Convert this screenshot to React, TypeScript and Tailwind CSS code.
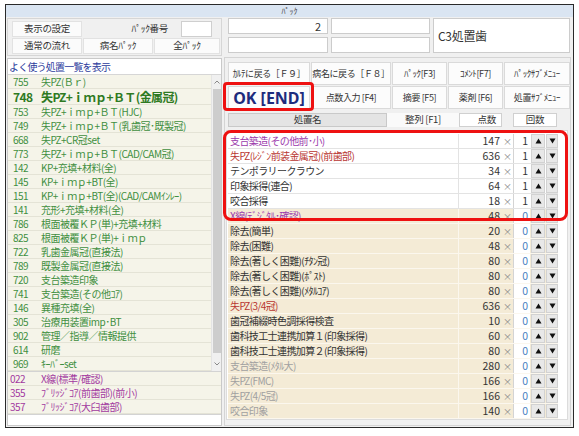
import React from "react";

type Row = { name: string; pts: number; cnt: number; color: "p" | "r" | "d" | "g"; bg: "w" | "c" };

const rows: Row[] = [
  { name: "支台築造(その他前･小)", pts: 147, cnt: 1, color: "p", bg: "w" },
  { name: "失PZ(ﾚｼﾞﾝ前装金属冠)(前歯部)", pts: 636, cnt: 1, color: "r", bg: "w" },
  { name: "テンポラリークラウン", pts: 34, cnt: 1, color: "d", bg: "w" },
  { name: "印象採得(連合)", pts: 64, cnt: 1, color: "d", bg: "w" },
  { name: "咬合採得", pts: 18, cnt: 1, color: "d", bg: "w" },
  { name: "X線(ﾃﾞｼﾞﾀﾙ･確認)", pts: 48, cnt: 0, color: "p", bg: "c" },
  { name: "除去(簡単)", pts: 20, cnt: 0, color: "d", bg: "c" },
  { name: "除去(困難)", pts: 48, cnt: 0, color: "d", bg: "c" },
  { name: "除去(著しく困難)(ﾁﾀﾝ冠)", pts: 80, cnt: 0, color: "d", bg: "c" },
  { name: "除去(著しく困難)(ﾎﾟｽﾄ)", pts: 80, cnt: 0, color: "d", bg: "c" },
  { name: "除去(著しく困難)(ﾒﾀﾙｺｱ)", pts: 80, cnt: 0, color: "d", bg: "c" },
  { name: "失PZ(3/4冠)", pts: 636, cnt: 0, color: "r", bg: "c" },
  { name: "歯冠補綴時色調採得検査", pts: 10, cnt: 0, color: "d", bg: "c" },
  { name: "歯科技工士連携加算１(印象採得)", pts: 60, cnt: 0, color: "d", bg: "c" },
  { name: "歯科技工士連携加算２(印象採得)", pts: 80, cnt: 0, color: "d", bg: "c" },
  { name: "支台築造(ﾒﾀﾙ大)", pts: 280, cnt: 0, color: "g", bg: "c" },
  { name: "失PZ(FMC)", pts: 166, cnt: 0, color: "g", bg: "c" },
  { name: "失PZ(4/5冠)", pts: 166, cnt: 0, color: "g", bg: "c" },
  { name: "咬合印象", pts: 140, cnt: 0, color: "g", bg: "c" },
];

const colorCls: Record<string, string> = {
  p: "text-[#9b3aac]",
  r: "text-[#b8352f]",
  d: "text-[#333333]",
  g: "text-[#a0a0a0]",
};

const leftItems: [string, string][] = [
  ["753", "失PZ+ｉｍｐ+ＢＴ(HJC)"],
  ["749", "失PZ+ｉｍｐ+ＢＴ(乳歯冠･既製冠)"],
  ["668", "失PZ+CR冠set"],
  ["773", "失PZ+ｉｍｐ+ＢＴ(CAD/CAM冠)"],
  ["142", "KP+充填+材料(全)"],
  ["145", "KP+ｉｍｐ+BT(全)"],
  ["151", "KP+ｉｍｐ+BT(全)(CAD/CAMｲﾝﾚｰ)"],
  ["141", "充形+充填+材料(全)"],
  ["786", "根面被覆ＫＰ(単)+充填+材料"],
  ["825", "根面被覆ＫＰ(単)+ｉｍｐ"],
  ["722", "乳歯金属冠(直接法)"],
  ["789", "既製金属冠(直接法)"],
  ["720", "支台築造印象"],
  ["741", "支台築造(その他ｺｱ)"],
  ["146", "異種充填(全)"],
  ["305", "治療用装置imp･BT"],
  ["902", "管理／指導／情報提供"],
  ["614", "研磨"],
  ["969", "ｷｰﾊﾞｰset"],
];

const lowerItems: [string, string][] = [
  ["022", "X線(標準/確認)"],
  ["355", "ﾌﾞﾘｯｼﾞｺｱ(前歯部)(前小)"],
  ["357", "ﾌﾞﾘｯｼﾞｺｱ(大臼歯部)"],
];

function Tri({ up }: { up: boolean }) {
  return (
    <svg width="7" height="6" viewBox="0 0 7 6">
      {up ? <polygon points="3.5,0.5 6.5,5.5 0.5,5.5" fill="#111" /> : <polygon points="0.5,0.5 6.5,0.5 3.5,5.5" fill="#111" />}
    </svg>
  );
}

function Chev({ up }: { up: boolean }) {
  return (
    <svg width="6" height="4" viewBox="0 0 6 4">
      <polyline points={up ? "0.5,3.5 3,1 5.5,3.5" : "0.5,0.5 3,3 5.5,0.5"} fill="none" stroke="#888" strokeWidth="1" />
    </svg>
  );
}

function SmallBtn({ children, w }: { children: React.ReactNode; w: string }) {
  return (
    <div className={`${w} h-[16px] bg-[#fbfbfb] border border-[#e2e2e2] flex items-center justify-center text-[9.5px] tracking-[-0.3px] text-[#333]`}>
      {children}
    </div>
  );
}

export default function App() {
  return (
    <div className="relative w-[579px] h-[436px] bg-white pt-[4px] pl-[5px] overflow-hidden font-['Noto_Sans_CJK_JP',sans-serif] text-[#333] leading-none">
      <div className="w-[569px] h-[424px] border border-[#2a2a2a] bg-[#f0f0f0] flex flex-col">
        <div className="h-[12px] bg-[#dae5f2] text-[8px] leading-[12px] text-center text-[#444]">ﾊﾟｯｸ</div>
        <div className="flex flex-1 min-h-0">
          {/* LEFT COLUMN */}
          <div className="ml-[1px] w-[215px] flex flex-col">
            <div className="mt-[1px] h-[38px] border border-[#d6d6d6] pt-[2px] pl-[4px] flex flex-col">
              <div className="flex h-[16px] items-center">
                <SmallBtn w="w-[70px]">表示の設定</SmallBtn>
                <div className="w-[86px] text-right text-[9.5px] tracking-[-0.3px]">ﾊﾟｯｸ番号</div>
                <div className="ml-[13px] w-[31px] h-[16px] bg-white border border-[#cfcfcf]" />
              </div>
              <div className="flex h-[16px] mt-[1px]">
                <SmallBtn w="w-[70px]">通常の流れ</SmallBtn>
                <div className="ml-[1px]"><SmallBtn w="w-[70px]">病名ﾊﾟｯｸ</SmallBtn></div>
                <div className="ml-[1px]"><SmallBtn w="w-[66px]">全ﾊﾟｯｸ</SmallBtn></div>
              </div>
            </div>
            <div className="mt-[2px] mb-[1px] flex-1 min-h-0 bg-white border border-[#c9c9c9] flex flex-col">
              <div className="h-[16px] border-b border-[#d6d6d6] pl-[1px] flex items-center text-[10px] tracking-[-0.8px] text-[#2c3b9c]">
                よく使う処置一覧を表示
              </div>
              <div className="h-[296px] flex overflow-hidden">
                <div className="flex-1 bg-[#f5f4e9] flex flex-col text-[#3f8f3f] text-[10px] tracking-[-0.5px]">
                  <div className="h-[14px] shrink-0 flex items-center border-b border-[#e4e3d6] pl-[5px]">
                    <span className="w-[28px]">755</span>
                    <span>失PZ(Ｂｒ)</span>
                  </div>
                  <div className="h-[16px] shrink-0 flex items-center border-b border-[#e4e3d6] pl-[5px] text-[12px] font-bold text-[#2e7a22] tracking-[-0.6px]">
                    <span className="w-[28px]">748</span>
                    <span>失PZ+ｉｍｐ+ＢＴ(金属冠)</span>
                  </div>
                  {leftItems.map(([n, t]) => (
                    <div key={n} className="h-[14px] shrink-0 flex items-center border-b border-[#e4e3d6] pl-[5px]">
                      <span className="w-[28px]">{n}</span>
                      <span>{t}</span>
                    </div>
                  ))}
                </div>
                <div className="w-[10px] bg-[#f0f0f0] border-l border-[#e4e4e4] flex flex-col items-center">
                  <div className="h-[14px] flex items-center justify-center"><Chev up /></div>
                  <div className="w-[8px] h-[264px] bg-[#cdcdcd]" />
                  <div className="flex-1" />
                  <div className="h-[14px] flex items-center justify-center"><Chev up={false} /></div>
                </div>
              </div>
              <div className="border-y border-[#d3d3d3] bg-[#f5f4e9] flex flex-col text-[10px] tracking-[-0.5px] text-[#a2399f]">
                {lowerItems.map(([n, t]) => (
                  <div key={n} className="h-[14px] flex items-center border-b border-[#e4e3d6] pl-[2px]">
                    <span className="w-[31px]">{n}</span>
                    <span>{t}</span>
                  </div>
                ))}
              </div>
            </div>
          </div>

          {/* RIGHT COLUMN */}
          <div className="ml-[2px] w-[347px] flex flex-col">
            <div className="mt-[1px] h-[36px] flex pl-[4px]">
              <div className="w-[100px] flex flex-col gap-[3px]">
                <div className="h-[16px] bg-white border border-[#cccccc] text-[11px] flex items-center justify-end pr-[6px]">2</div>
                <div className="h-[16px] bg-white border border-[#cccccc]" />
              </div>
              <div className="ml-[3px] w-[99px] flex flex-col gap-[3px]">
                <div className="h-[16px] bg-white border border-[#cccccc]" />
                <div className="h-[16px] bg-white border border-[#cccccc]" />
              </div>
              <div className="ml-[3px] w-[137px] h-[35px] bg-white border border-[#cccccc] flex items-center pl-[4px] text-[12px] tracking-[-0.3px]">
                C3処置歯
              </div>
            </div>
            <div className="mt-[3px] mb-[1px] flex-1 min-h-0 border border-[#d4d4d4] flex flex-col">
              <div className="pt-[4px] pl-[3px] flex flex-col text-[9px] tracking-[-0.4px] text-[#333]">
                <div className="flex h-[23px] gap-[1px]">
                  <div className="w-[82px] bg-[#fcfcfc] border border-[#dadada] flex items-center justify-center">ｶﾙﾃに戻る［Ｆ９］</div>
                  <div className="w-[80px] bg-[#fcfcfc] border border-[#dadada] flex items-center justify-center">病名に戻る［Ｆ８］</div>
                  <div className="w-[55px] bg-[#fcfcfc] border border-[#dadada] flex items-center justify-center">ﾊﾟｯｸ[F3]</div>
                  <div className="w-[55px] bg-[#fcfcfc] border border-[#dadada] flex items-center justify-center">ｺﾒﾝﾄ[F7]</div>
                  <div className="w-[66px] bg-[#fcfcfc] border border-[#dadada] flex items-center justify-center">ﾊﾟｯｸｻﾌﾞﾒﾆｭｰ</div>
                </div>
                <div className="flex h-[23px] gap-[1px] mt-[1px]">
                  <div className="w-[82px] bg-[#fcfcfc] border border-[#dadada] flex items-center justify-center font-['Noto_Sans',sans-serif] font-bold text-[16px] tracking-[0px] text-[#1d2b7d]">OK [END]</div>
                  <div className="w-[80px] bg-[#fcfcfc] border border-[#dadada] flex items-center justify-center">点数入力 [F4]</div>
                  <div className="w-[55px] bg-[#fcfcfc] border border-[#dadada] flex items-center justify-center">摘要 [F5]</div>
                  <div className="w-[55px] bg-[#fcfcfc] border border-[#dadada] flex items-center justify-center">薬剤 [F6]</div>
                  <div className="w-[66px] bg-[#fcfcfc] border border-[#dadada] flex items-center justify-center">処置ｻﾌﾞﾒﾆｭｰ</div>
                </div>
              </div>
              <div className="mt-[4px] h-[14px] flex pl-[3px] text-[9.5px] tracking-[-0.3px] text-[#333]">
                <div className="w-[159px] bg-[#e4e4e4] border border-[#c9c9c9] flex items-center justify-center">処置名</div>
                <div className="w-[72px] bg-[#fafafa] flex items-center justify-center">整列 [F1]</div>
                <div className="w-[43px] bg-white border border-[#d0d0d0] flex items-center justify-end pr-[5px]">点数</div>
                <div className="ml-[11px] w-[44px] bg-white border border-[#d0d0d0] flex items-center justify-center">回数</div>
              </div>
              <div className="mt-[3px] mb-[5px] ml-[1px] w-[342px] flex-1 min-h-0 bg-white border border-[#dcdcdc] pt-[3px] pl-[1px] overflow-hidden">
                {rows.map((r, i) => (
                  <div
                    key={i}
                    className={
                      r.bg === "w"
                        ? "w-[330px] h-[15px] flex bg-white border-b border-[#e3e3e3]"
                        : "w-[330px] h-[15px] flex bg-[#f4ebd6] border-b border-[#fbf7ee]"
                    }
                  >
                    <div
                      className={
                        (r.bg === "w" ? "border-r border-[#e3e3e3] " : "border-r border-[#fbf7ee] ") +
                        "w-[231px] pl-[2px] flex items-center text-[10px] tracking-[-0.6px] " +
                        colorCls[r.color]
                      }
                    >
                      {r.name}
                    </div>
                    <div className="w-[54px] flex items-center justify-end pr-[1px] text-[10.5px] text-[#333]">
                      <span>{r.pts}</span>
                      <span className="ml-[3px] text-[#888] text-[9px]">×</span>
                    </div>
                    <div
                      className={
                        (r.cnt === 1 ? "text-[#333] " : "text-[#4a7fc1] ") +
                        "w-[17px] h-[14px] bg-white border-l border-[#d4d4d4] flex items-center justify-end pr-[2px] text-[10.5px]"
                      }
                    >
                      {r.cnt}
                    </div>
                    <div className="ml-[1px] w-[14px] h-[14px] bg-[#e8e8e8] border border-[#d2d2d2] flex items-center justify-center">
                      <Tri up />
                    </div>
                    <div className="ml-[1px] w-[12px] h-[14px] bg-[#e8e8e8] border border-[#d2d2d2] flex items-center justify-center">
                      <Tri up={false} />
                    </div>
                  </div>
                ))}
              </div>
            </div>
          </div>
        </div>
      </div>

      {/* red highlight overlays */}
      <div className="absolute left-[223px] top-[82px] w-[91px] h-[29px] border-[3px] border-[#ee1111] rounded-[4px] pointer-events-none" />
      <div className="absolute left-[223px] top-[130px] w-[345px] h-[91px] border-[3px] border-[#ee1111] rounded-[8px] pointer-events-none" />
    </div>
  );
}
